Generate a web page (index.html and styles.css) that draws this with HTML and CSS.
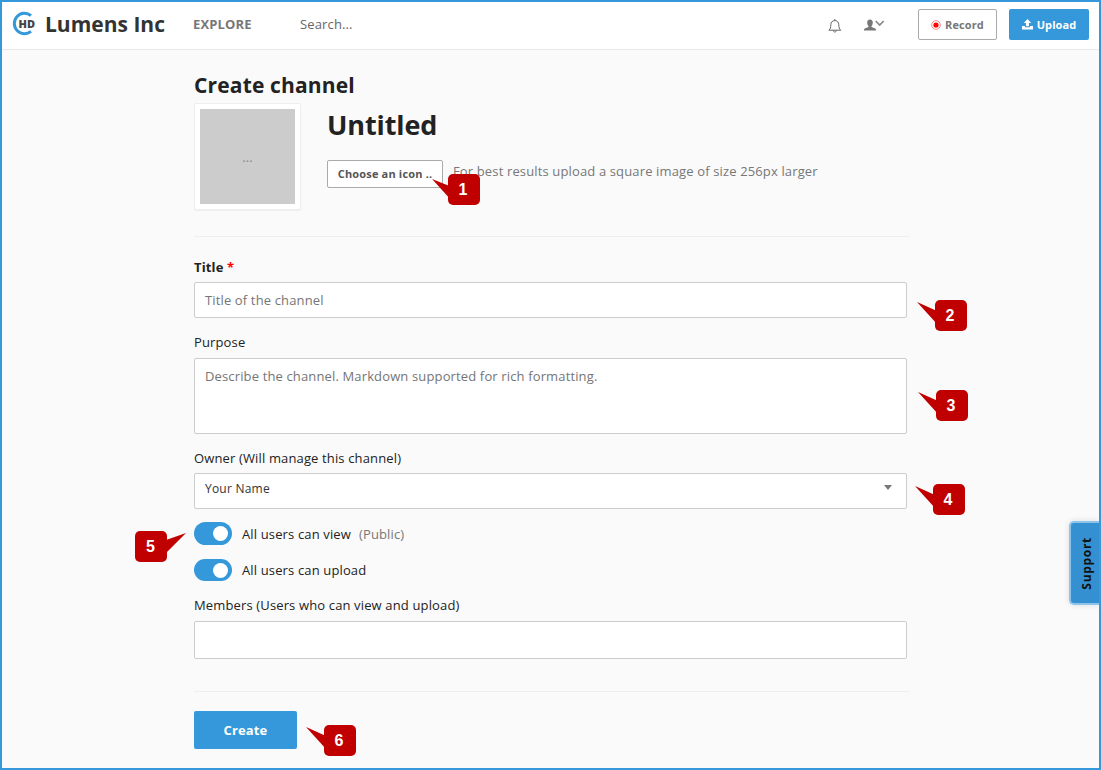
FILE: index.html
```html
<!DOCTYPE html>
<html lang="en">
<head>
<meta charset="utf-8">
<title>Create channel</title>
<link rel="stylesheet" href="styles.css">
</head>
<body>
<div class="frame">
  <header class="topbar">
    <svg class="logo" width="26" height="26" viewBox="0 0 26 26">
      <path d="M20 4.6A10.2 10.2 0 1 0 20 20.4" fill="none" stroke="#3598db" stroke-width="3"/>
      <text class="logo-text" x="7.6" y="16.6" textLength="16.5" lengthAdjust="spacingAndGlyphs">HD</text>
    </svg>
    <span class="brand">Lumens Inc</span>
    <a class="explore">EXPLORE</a>
    <span class="search">Search...</span>
    <svg class="bell" width="14" height="14" viewBox="0 0 14 14" fill="none" stroke="#666" stroke-width="1">
      <path d="M.8 11.2C2.3 10 2.8 8.5 2.8 5.8C2.8 3.2 4.3 1.6 6.8 1.6S10.8 3.2 10.8 5.8C10.8 8.5 11.3 10 12.8 11.2ZM6.8 0V1.6M5.3 11.4C5.4 13.6 8.2 13.6 8.3 11.4"/>
    </svg>
    <svg class="user" width="22" height="13" viewBox="0 0 22 13">
      <path d="M6 .5C7.9.5 8.9 1.8 8.8 3.8C8.8 5.4 8.1 6.3 7.5 7V8L11.2 9.4C11.8 9.8 12 10.3 12 11.5H0C0 10.3.2 9.8.8 9.4L4.5 8V7C3.9 6.3 3.2 5.4 3.2 3.8C3.1 1.8 4.1.5 6 .5Z" fill="#777"/>
      <path d="M11.7 2L15.7 6L19.7 2" fill="none" stroke="#888" stroke-width="1.7"/>
    </svg>
    <button class="btn record">
      <svg class="dot" width="10" height="10" viewBox="0 0 10 10"><circle cx="5" cy="5" r="4.3" fill="#fff" stroke="#f77" stroke-width=".9"/><circle cx="5" cy="5" r="2.6" fill="#f00"/></svg>
      <span>Record</span>
    </button>
    <button class="btn upload">
      <svg width="11" height="11" viewBox="0 0 11 11" fill="#fff"><path d="M5.5 0L9.2 4H7V7.2H4V4H1.8ZM0 7H3V8.2H8V7H11V10.5H0Z"/></svg>
      <span>Upload</span>
    </button>
  </header>

  <main class="content">
    <h1 class="page-title">Create channel</h1>
    <section class="identity">
      <div class="thumb"><div class="thumb-fill">...</div></div>
      <div class="identity-info">
        <h2 class="channel-name">Untitled</h2>
        <div class="icon-row">
          <button class="choose">Choose an icon ..</button>
          <span class="hint">For best results upload a square image of size 256px larger</span>
        </div>
      </div>
    </section>

    <form class="form">
      <label class="label strong"><span class="label-text">Title</span> <span class="required">*</span></label>
      <div class="field title-field"><span class="title-ph">Title of the channel</span></div>
      <label class="label purpose-label"><span>Purpose</span></label>
      <div class="field area"><span class="area-ph">Describe the channel. Markdown supported for rich formatting.</span></div>
      <label class="label owner-label"><span>Owner (Will manage this channel)</span></label>
      <div class="field select"><span class="owner">Your Name</span><i class="caret"></i></div>
      <div class="switch-row"><i class="switch"></i><span class="view">All users can view</span><span class="public">(Public)</span></div>
      <div class="switch-row second"><i class="switch"></i><span class="can-upload">All users can upload</span></div>
      <label class="label members-label"><span>Members (Users who can view and upload)</span></label>
      <div class="field members"></div>
      <div class="actions"><button class="create" type="button">Create</button></div>
    </form>
  </main>
</div>

<aside class="support"><span>Support</span></aside>

<div class="callout c1"><svg width="20" height="30" viewBox="0 0 20 30"><path d="M0 5L20 13V27Z"/></svg><b>1</b></div>
<div class="callout c2"><svg width="20" height="30" viewBox="0 0 20 30"><path d="M0 2L20 11V24Z"/></svg><b>2</b></div>
<div class="callout c3"><svg width="20" height="30" viewBox="0 0 20 30"><path d="M0 2L20 11V24Z"/></svg><b>3</b></div>
<div class="callout c4"><svg width="20" height="30" viewBox="0 0 20 30"><path d="M0 2L20 11V24Z"/></svg><b>4</b></div>
<div class="callout c5"><svg width="20" height="30" viewBox="0 0 20 30"><path d="M20 2L0 9V22Z"/></svg><b>5</b></div>
<div class="callout c6"><svg width="20" height="30" viewBox="0 0 20 30"><path d="M0 2L20 11V24Z"/></svg><b>6</b></div>
</body>
</html>
```
FILE: styles.css
```css
* { box-sizing: border-box; }
body { margin: 0; font: 13px/18px "Open Sans", "Noto Sans", sans-serif; letter-spacing: .14px; color: #222; background: #fafafa; }
button { font-family: inherit; letter-spacing: inherit; padding: 0; margin: 0; }
h1, h2 { margin: 0; }
.frame { width: 1101px; height: 770px; border: 2px solid #3598db; overflow: hidden; }

.topbar { height: 48px; background: #fff; border-bottom: 1px solid #e9e9e9; display: flex; align-items: center; padding: 0 10px 4px 9px; white-space: nowrap; }
.logo { flex: none; margin-top: 1px; }
.logo-text { font: 800 10px "Open Sans", sans-serif; letter-spacing: 0; fill: #444; }
.brand { width: 148px; margin-left: 8px; font-size: 21px; font-weight: 700; letter-spacing: 0; color: #333; }
.explore { width: 106px; font-weight: 700; color: #777; }
.search { width: 528px; margin-left: 1px; color: #666; }
.bell { flex: none; width: 14px; margin-top: 4px; }
.user { flex: none; margin: 4px 32px 0 22px; }
.btn { display: flex; align-items: center; justify-content: center; gap: 4px; flex: none; height: 31px; border-radius: 2px; font-size: 11px; font-weight: 700; margin-top: 1px; letter-spacing: .1px; }
.record { width: 79px; border: 1px solid #aaa; background: #fff; color: #777; }
.dot { margin-top: 2px; }
.upload { width: 80px; border: 0; background: #3598db; color: #fff; margin-left: 12px; }

.content { width: 713px; margin-left: 192px; padding-top: 20px; }
.page-title { font-size: 21px; line-height: 30px; height: 33px; font-weight: 700; letter-spacing: .16px; }
.identity { display: flex; height: 134px; border-bottom: 1px solid #eee; width: 715px; }
.thumb { width: 107px; height: 107px; padding: 5px; background: #fff; border: 1px solid #eee; border-radius: 2px; box-shadow: 0 1px 1px #eee; }
.thumb-fill { height: 95px; background: #ccc; color: #888; display: flex; align-items: center; justify-content: center; }
.identity-info { margin-left: 26px; padding-top: 3px; }
.channel-name { font-size: 27px; line-height: 38px; font-weight: 700; letter-spacing: -.1px; }
.icon-row { display: flex; margin-top: 16px; }
.choose { width: 116px; height: 28px; border: 1px solid #aaa; border-radius: 2px; background: #fff; font-size: 11px; font-weight: 700; letter-spacing: .17px; padding-bottom: 2px; color: #555; white-space: nowrap; }
.hint { margin: 2px 0 0 10px; color: #777; white-space: nowrap; }

.form { padding-top: 21px; }
.label { display: block; height: 24px; }
.strong { font-weight: 700; }
.required { color: #f00; }
.field { display: flex; height: 36px; border: 1px solid #ccc; border-radius: 2px; background: #fff; padding: 8px 10px; color: #757575; }
.purpose-label { margin-top: 15px; height: 25px; }
.area { height: 76px; }
.owner-label { margin-top: 15px; }
.select { justify-content: space-between; color: #333; padding-top: 6px; }
.owner { font-size: 12px; letter-spacing: .22px; }
.caret { width: 0; height: 0; margin: 5px 4px 0 0; border: 4px solid transparent; border-top: 5px solid #777; border-bottom: 0; }
.switch-row { display: flex; align-items: center; height: 23px; margin-top: 13px; }
.switch { width: 38px; height: 23px; border-radius: 12px; background: #3598db; padding: 4px; display: flex; justify-content: flex-end; margin-right: 10px; }
.switch::after { content: ""; width: 15px; height: 15px; border-radius: 50%; background: #fff; }
.second .switch { height: 22px; margin-top: 1px; }
.public { margin-left: 8px; color: #777; }
.members-label { margin-top: 15px; height: 25px; }
.members { height: 38px; }
.actions { margin-top: 32px; width: 715px; border-top: 1px solid #eee; padding-top: 19px; }
.create { width: 103px; height: 38px; border: 0; border-radius: 2px; background: #3598db; color: #fff; font-size: 13px; font-weight: 700; }

.support { position: absolute; left: 1069px; top: 521px; width: 30px; height: 84px; background: #3490d0; border: 2px solid #8cc4eb; border-right: 0; border-radius: 5px 0 0 5px; display: flex; align-items: center; justify-content: center; box-shadow: 0 0 6px #ddd; clip-path: inset(-8px 0 -8px -8px); }
.support span { writing-mode: vertical-rl; transform: rotate(180deg); color: #111; font-size: 12px; letter-spacing: .7px; font-weight: 700; padding-right: 3px; }

.callout { position: absolute; display: flex; height: 30px; letter-spacing: 0; }
.callout svg { flex: none; fill: #c00000; margin-right: -2.5px; }
.callout b { width: 32px; height: 30.5px; border-radius: 5px; background: #c00000; color: #fff; font: bold 16px/32px "Liberation Sans", Arial, sans-serif; text-align: center; padding-right: 1px; }
.c1 { left: 432px; top: 174px; }
.c1 svg { margin-right: -4.5px; }
.c2 { left: 917px; top: 300px; }
.c3 { left: 918px; top: 390px; }
.c4 { left: 915px; top: 484px; }
.c5 { left: 135px; top: 531px; flex-direction: row-reverse; }
.c5 svg { margin: 0 0 0 -1px; }
.c6 { left: 306px; top: 725px; }
```
